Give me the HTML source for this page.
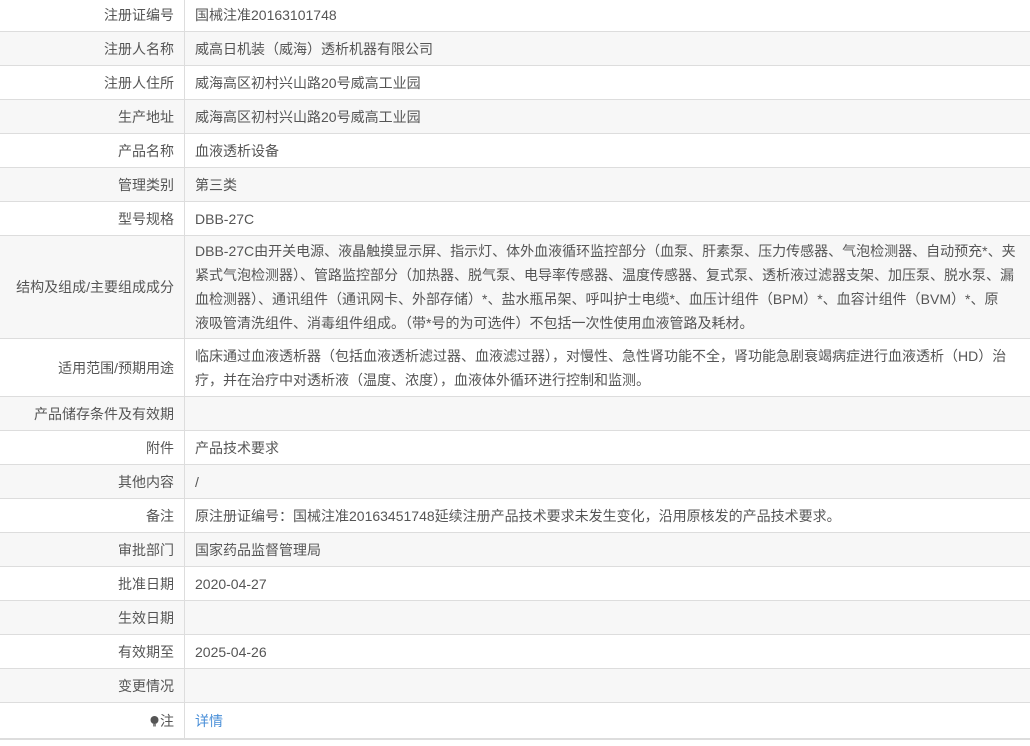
<!DOCTYPE html>
<html><head><meta charset="utf-8"><style>
body{margin:0;background:#fff;font-family:"Liberation Sans","Noto Sans CJK SC",sans-serif;font-size:14px;color:#555;}
table{border-collapse:collapse;width:1030px;position:absolute;top:-2px;left:0;}
td{border-bottom:1px solid #ddd;padding:0 10px;height:33px;vertical-align:middle;}
td.l{width:164px;text-align:right;border-right:1px solid #ddd;}
tr:nth-child(even) td{background:#f7f7f7;}
.m{line-height:24px;padding:3px 10px 3px;white-space:nowrap;height:auto;}
.m2{line-height:24px;padding:5px 10px 4px;white-space:nowrap;height:auto;}
a{color:#4a8fd8;text-decoration:none;}
.pin{display:inline-block;width:9px;height:11px;vertical-align:-1px;margin-right:1px}
</style></head><body>
<table>
<tr><td class="l">注册证编号</td><td>国械注准20163101748</td></tr>
<tr><td class="l">注册人名称</td><td>威高日机装（威海）透析机器有限公司</td></tr>
<tr><td class="l">注册人住所</td><td>威海高区初村兴山路20号威高工业园</td></tr>
<tr><td class="l">生产地址</td><td>威海高区初村兴山路20号威高工业园</td></tr>
<tr><td class="l">产品名称</td><td>血液透析设备</td></tr>
<tr><td class="l">管理类别</td><td>第三类</td></tr>
<tr><td class="l">型号规格</td><td>DBB-27C</td></tr>
<tr><td class="l">结构及组成/主要组成成分</td><td class="m">DBB-27C由开关电源、液晶触摸显示屏、指示灯、体外血液循环监控部分（血泵、肝素泵、压力传感器、气泡检测器、自动预充*、夹<br>紧式气泡检测器）、管路监控部分（加热器、脱气泵、电导率传感器、温度传感器、复式泵、透析液过滤器支架、加压泵、脱水泵、漏<br>血检测器）、通讯组件（通讯网卡、外部存储）*、盐水瓶吊架、呼叫护士电缆*、血压计组件（BPM）*、血容计组件（BVM）*、原<br>液吸管清洗组件、消毒组件组成。（带*号的为可选件）不包括一次性使用血液管路及耗材。</td></tr>
<tr><td class="l">适用范围/预期用途</td><td class="m2">临床通过血液透析器（包括血液透析滤过器、血液滤过器），对慢性、急性肾功能不全，肾功能急剧衰竭病症进行血液透析（HD）治<br>疗，并在治疗中对透析液（温度、浓度），血液体外循环进行控制和监测。</td></tr>
<tr><td class="l">产品储存条件及有效期</td><td></td></tr>
<tr><td class="l">附件</td><td>产品技术要求</td></tr>
<tr><td class="l">其他内容</td><td>/</td></tr>
<tr><td class="l">备注</td><td>原注册证编号：国械注准20163451748延续注册产品技术要求未发生变化，沿用原核发的产品技术要求。</td></tr>
<tr><td class="l">审批部门</td><td>国家药品监督管理局</td></tr>
<tr><td class="l">批准日期</td><td>2020-04-27</td></tr>
<tr><td class="l">生效日期</td><td></td></tr>
<tr><td class="l">有效期至</td><td>2025-04-26</td></tr>
<tr><td class="l">变更情况</td><td></td></tr>
<tr><td class="l" style="height:35px;border-bottom:2px solid #ddd"><svg class="pin" viewBox="0 0 9 11"><circle cx="4.5" cy="4" r="4" fill="#555"/><rect x="3" y="8" width="3" height="2.5" fill="#888"/></svg>注</td><td style="border-bottom:2px solid #ddd"><a>详情</a></td></tr>
</table>
</body></html>
